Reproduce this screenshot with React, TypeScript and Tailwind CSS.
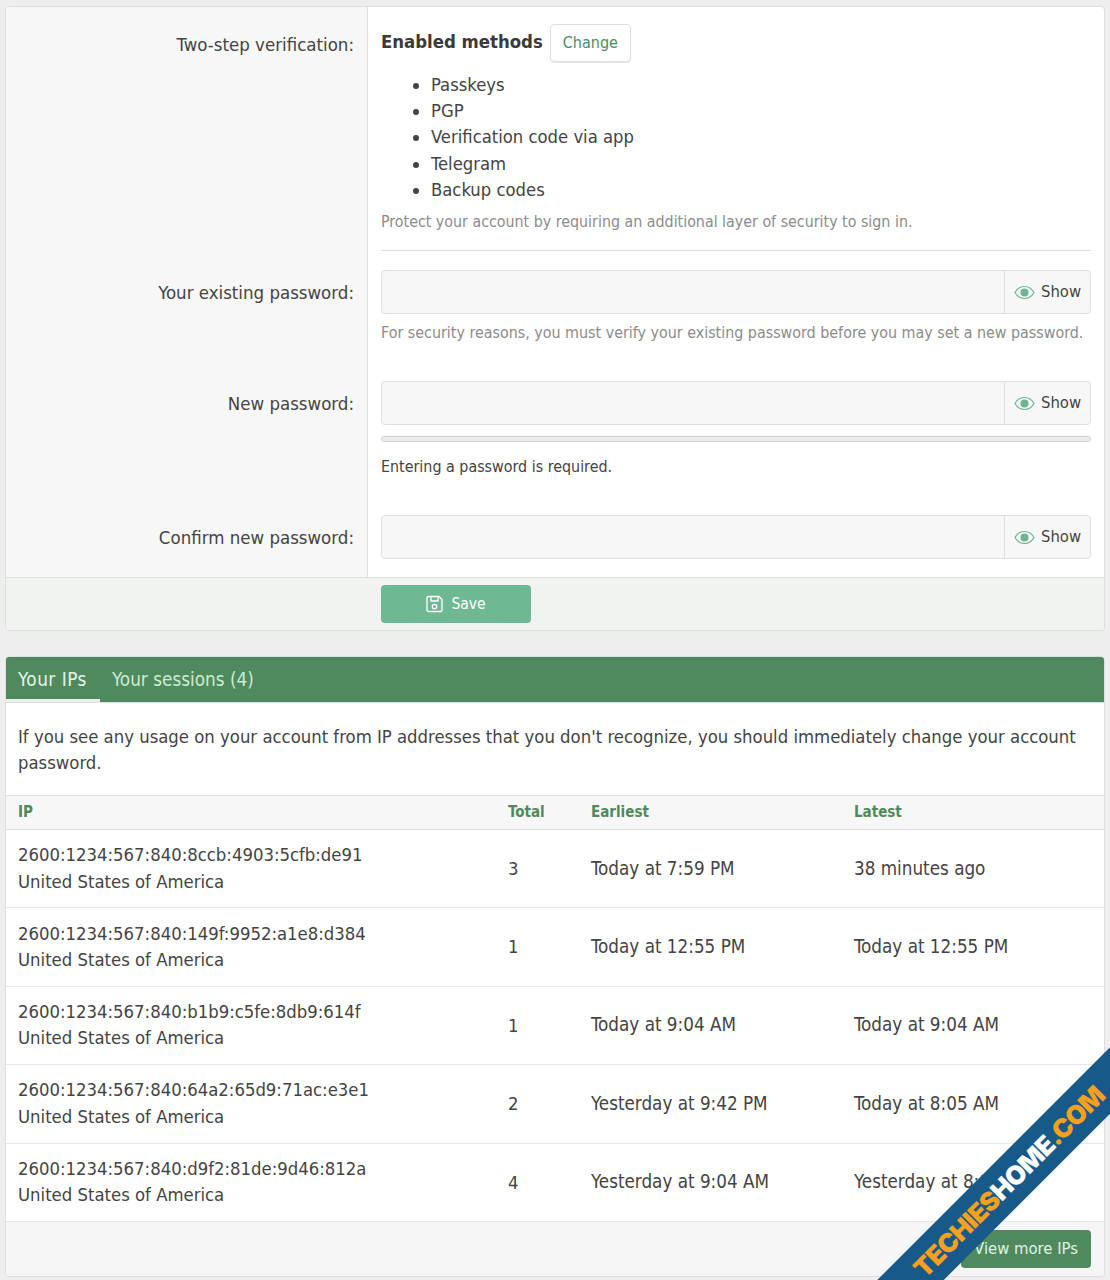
const font = "font-['DejaVu_Sans_Condensed','DejaVu_Sans',sans-serif]";

const methods = ['Passkeys', 'PGP', 'Verification code via app', 'Telegram', 'Backup codes'];

const ips = [
  { ip: '2600:1234:567:840:8ccb:4903:5cfb:de91', total: 3, earliest: 'Today at 7:59 PM', latest: '38 minutes ago' },
  { ip: '2600:1234:567:840:149f:9952:a1e8:d384', total: 1, earliest: 'Today at 12:55 PM', latest: 'Today at 12:55 PM' },
  { ip: '2600:1234:567:840:b1b9:c5fe:8db9:614f', total: 1, earliest: 'Today at 9:04 AM', latest: 'Today at 9:04 AM' },
  { ip: '2600:1234:567:840:64a2:65d9:71ac:e3e1', total: 2, earliest: 'Yesterday at 9:42 PM', latest: 'Today at 8:05 AM' },
  { ip: '2600:1234:567:840:d9f2:81de:9d46:812a', total: 4, earliest: 'Yesterday at 9:04 AM', latest: 'Yesterday at 8:05 PM' },
];

function EyeIcon() {
  return (
    <svg width="21" height="15" viewBox="0 0 21 15" fill="none" className="shrink-0">
      <path d="M1 7.5C3.2 3.6 6.5 1.5 10.5 1.5S17.8 3.6 20 7.5C17.8 11.4 14.5 13.5 10.5 13.5S3.2 11.4 1 7.5Z" stroke="#6db592" strokeWidth="1.2" />
      <circle cx="10.5" cy="7.5" r="4" fill="#6db592" />
    </svg>
  );
}

function SaveIcon() {
  return (
    <svg width="18" height="18" viewBox="0 0 18 18" fill="none" stroke="#fff" strokeWidth="1.3">
      <path d="M2.5 1.5H13L16 4.5V15a1.5 1.5 0 0 1-1.5 1.5h-12A1.5 1.5 0 0 1 1 15V3a1.5 1.5 0 0 1 1.5-1.5Z" />
      <path d="M5 1.5V6h7V1.5" />
      <circle cx="8.5" cy="11.5" r="2.2" />
    </svg>
  );
}

function PasswordInput() {
  return (
    <div className="flex h-[44px] rounded-[4px] border border-[#dfdfdf] bg-[#f7f7f7]">
      <div className="flex-1 border-r border-[#dfdfdf]" />
      <div className="flex w-[85px] items-center gap-[6px] pl-[9px] text-[#444]">
        <EyeIcon />
        <span className="pt-[1px] text-[16.5px]">Show</span>
      </div>
    </div>
  );
}

function FormRow({ label, labelPad, children }: { label: string; labelPad: string; children: React.ReactNode }) {
  return (
    <div className="flex">
      <div className={`w-[362px] shrink-0 border-r border-[#dfdfdf] bg-[#f7f7f7] pr-[13px] text-right text-[18.5px] leading-[26px] text-[#444] ${labelPad}`}>
        {label}
      </div>
      <div className="min-w-0 flex-1 pl-[13px] pr-[13px]">{children}</div>
    </div>
  );
}

export default function App() {
  return (
    <div className={`relative h-[1280px] overflow-hidden bg-[#eeeeee] px-[5px] pt-[6px] text-[#3f3f3f] ${font}`}>
      <div className="overflow-hidden rounded-[4px] border border-[#dfdfdf] bg-white">
        <FormRow label="Two-step verification:" labelPad="pt-[25px]">
          <div className="h-[244px] border-b border-[#dfdfdf] pt-[17px]">
            <div className="flex h-[38px] items-center gap-[7px]">
              <span className="pb-[2px] text-[18.4px] font-bold text-[#3a3a3a]">Enabled methods</span>
              <span className="rounded-[4px] border border-[#dfdfdf] px-[12px] py-[5px] text-[16px] leading-[26px] text-[#4f8a68] shadow-[0_1px_1px_#e5e5e5]">Change</span>
            </div>
            <ul className="mt-[10px] list-disc pl-[50px] text-[18.3px] leading-[26.2px] text-[#444]">
              {methods.map(m => <li key={m}>{m}</li>)}
            </ul>
            <p className="mt-[6px] text-[15.85px] leading-[26px] text-[#8c8c8c]">Protect your account by requiring an additional layer of security to sign in.</p>
          </div>
        </FormRow>
        <FormRow label="Your existing password:" labelPad="pt-[29px]">
          <div className="h-[130px] pt-[19px]">
            <PasswordInput />
            <p className="mt-[6px] text-[15.9px] leading-[26px] text-[#8c8c8c]">For security reasons, you must verify your existing password before you may set a new password.</p>
          </div>
        </FormRow>
        <FormRow label="New password:" labelPad="pt-[10px]">
          <div className="h-[134px]">
            <PasswordInput />
            <div className="mt-[11px] h-[6px] rounded-full border border-[#d0d0d0] bg-[#ececec]" />
            <p className="mt-[12px] text-[15.9px] leading-[26px] text-[#444]">Entering a password is required.</p>
          </div>
        </FormRow>
        <FormRow label="Confirm new password:" labelPad="pt-[10px]">
          <div className="h-[62px]"><PasswordInput /></div>
        </FormRow>
        <div className="flex h-[53px] items-start border-t border-[#dfdfdf] bg-[#f1f3f1] pl-[375px] pt-[7px]">
          <div className="flex h-[38px] w-[150px] items-center justify-center gap-[7px] rounded-[4px] bg-[#6fb894] text-[15.5px] text-white">
            <SaveIcon />
            <span className="pt-[1px]">Save</span>
          </div>
        </div>
      </div>

      <div className="mt-[25px] overflow-hidden rounded-[4px] border border-[#dfdfdf] bg-white">
        <div className="flex h-[46px] border-b border-[#dfdfdf] bg-[#4f8a5e] text-[18.8px]">
          <div className="flex w-[94px] items-center border-b-[3px] border-[#eeeeee] pl-[12px] pt-[4px] tracking-[0.5px] text-[#e3f5e9]">Your IPs</div>
          <div className="flex items-center pl-[12px] pt-[1px] text-[#c9ecd4]">Your sessions (4)</div>
        </div>
        <p className="px-[12px] pb-[19px] pt-[21px] text-[18.35px] leading-[26px] text-[#444]">
          If you see any usage on your account from IP addresses that you don't recognize, you should immediately change your account password.
        </p>
        <table className="w-full table-fixed border-collapse">
          <thead>
            <tr className="h-[34px] border-y border-[#dfdfdf] bg-[#f7f7f7] text-left text-[15px] font-bold text-[#4f8a5e]">
              <th className="w-[489px] pl-[12px] font-bold">IP</th>
              <th className="w-[83px] pl-[13px] font-bold">Total</th>
              <th className="w-[263px] pl-[13px] font-bold">Earliest</th>
              <th className="pl-[13px] font-bold">Latest</th>
            </tr>
          </thead>
          <tbody className="text-[18.35px] text-[#444]">
            {ips.map(row => (
              <tr key={row.ip} className="h-[78.4px] border-b border-[#e8e8e8]">
                <td className="pl-[12px] leading-[26.4px]">
                  <div>{row.ip}</div>
                  <div>United States of America</div>
                </td>
                <td className="pl-[13px]">{row.total}</td>
                <td className="pl-[13px] text-[18.7px]">{row.earliest}</td>
                <td className="pl-[13px] text-[18.7px]">{row.latest}</td>
              </tr>
            ))}
          </tbody>
        </table>
        <div className="flex h-[54px] items-start justify-end bg-[#f5f5f5] pr-[13px] pt-[8px]">
          <div className="flex h-[38px] w-[130px] items-center justify-center rounded-[4px] bg-[#4f8a5e] text-[16.5px] text-[#dff3e6]">View more IPs</div>
        </div>
      </div>

      <div className="absolute left-[759px] top-[1158px] flex h-[47px] w-[500px] -rotate-45 items-center justify-center bg-[#175a8a] font-['Inter',sans-serif] text-[26px] font-black tracking-tight">
        <span className="text-[#f7a01d]">TECHIES</span>
        <span className="text-white">HOME</span>
        <span className="text-[#f7a01d]">.COM</span>
      </div>
    </div>
  );
}
